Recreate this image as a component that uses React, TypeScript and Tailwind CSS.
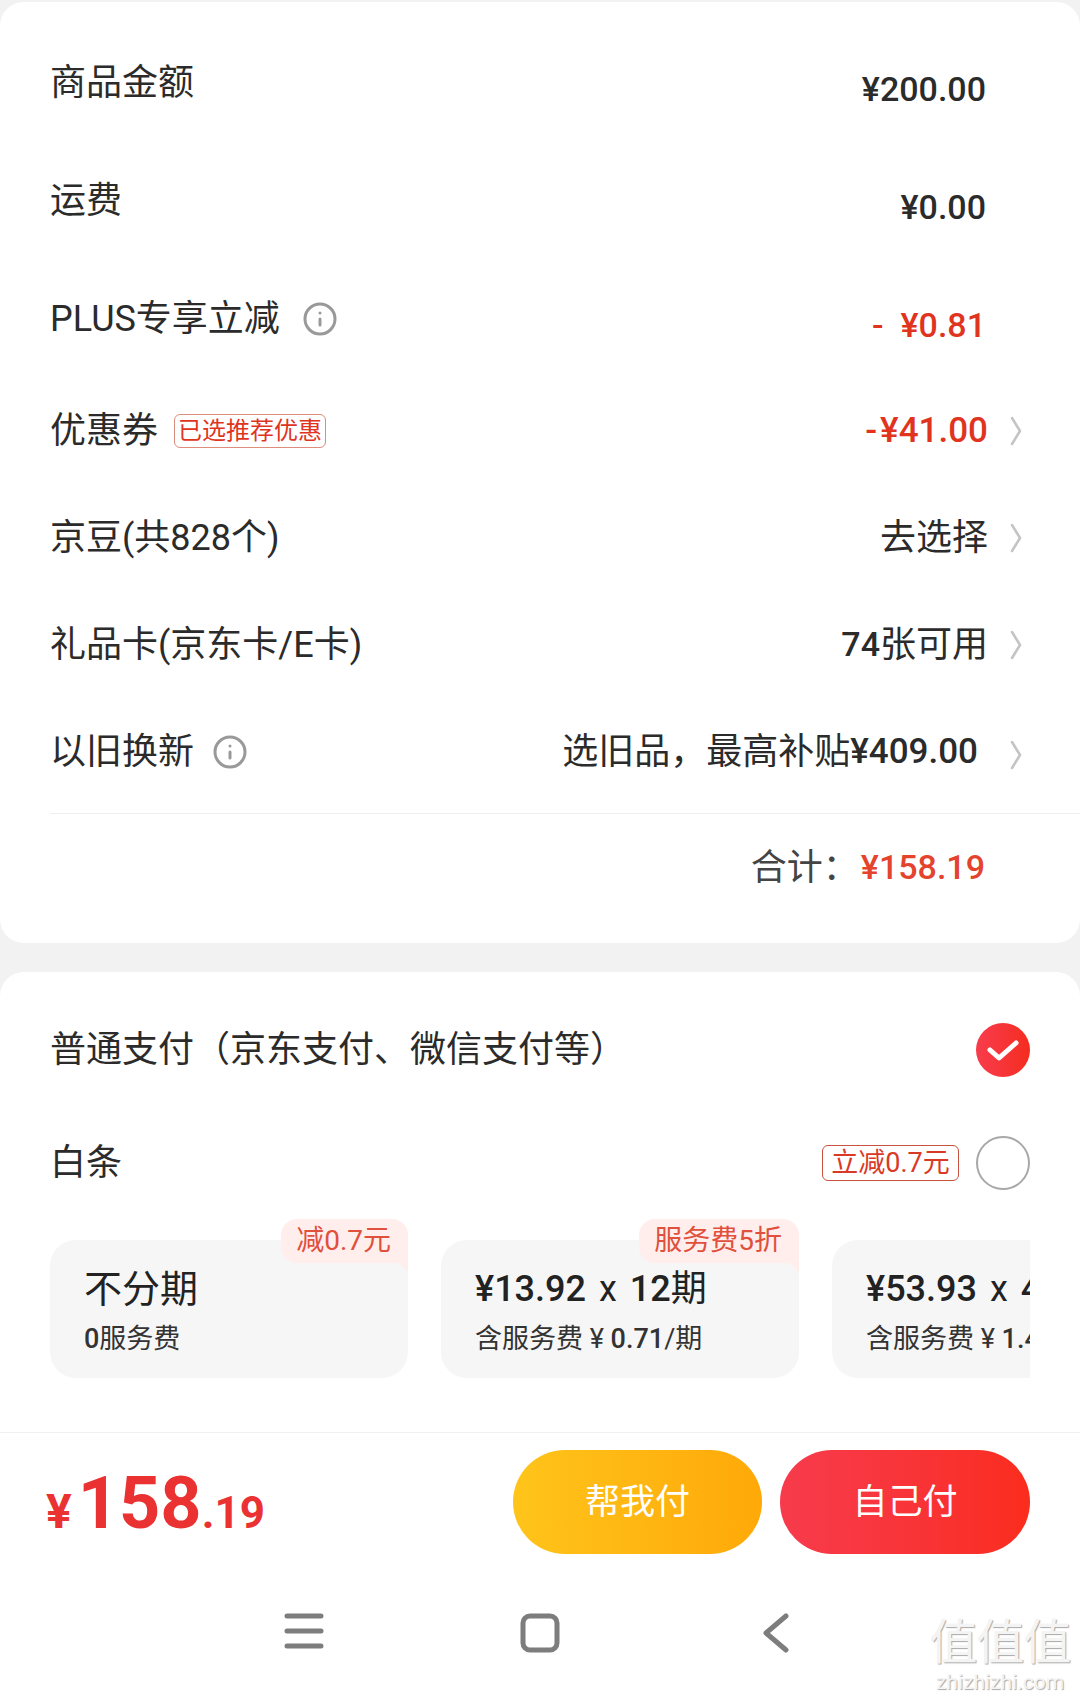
import { Info } from "lucide-react";

const ROWS_TOP = [
  { label: "商品金额", value: "¥200.00", h: "h-[118px]" },
  { label: "运费", value: "¥0.00", h: "h-[118px]" },
];

function Chevron() {
  return (
    <svg viewBox="0 0 12 30" className="w-[12px] h-[30px] shrink-0 ml-[22px]" fill="none">
      <path d="M2 2 L10 15 L2 28" stroke="#c4c4c4" strokeWidth="2.6" strokeLinecap="round" strokeLinejoin="round" />
    </svg>
  );
}

const PLANS = [
  { tag: "减0.7元", title: <span className="text-[38px] font-normal">不分期</span>, sub: <><b className="font-medium">0</b>服务费</> },
  {
    tag: "服务费5折",
    title: <>¥13.92 <span className="font-normal mx-[4px]">x</span> 12<span className="font-normal">期</span></>,
    sub: <>含服务费 ¥ <b className="font-medium">0.71</b>/期</>,
  },
  {
    tag: "",
    title: <>¥53.93 <span className="font-normal mx-[4px]">x</span> 4<span className="font-normal">期</span></>,
    sub: <>含服务费 ¥ <b className="font-medium">1.42</b>/期</>,
  },
];

export default function App() {
  return (
    <div className="relative w-[1080px] h-[1700px] overflow-hidden bg-[#f2f2f2] pt-[2px] flex flex-col text-[#2b2b2b] font-['Roboto','Noto_Sans_CJK_SC',sans-serif]">
      {/* order summary */}
      <section className="bg-white rounded-[24px] pt-[22px] pl-[50px] h-[941px] shrink-0 text-[36px]">
        {ROWS_TOP.map((r) => (
          <div key={r.label} className={`${r.h} flex items-center justify-between pr-[94px]`}>
            <span>{r.label}</span>
            <span className="font-medium pt-[12px] text-[34px]">{r.value}</span>
          </div>
        ))}
        <div className="h-[118px] flex items-center justify-between pr-[94px]">
          <span className="flex items-center">
            PLUS专享立减
            <Info className="ml-[22px] text-[#999999]" size={36} strokeWidth={2} />
          </span>
          <span className="font-medium pt-[12px] text-[34px] text-[#e0341f] whitespace-pre">-  ¥0.81</span>
        </div>
        <div className="h-[106px] flex items-center justify-between pr-[58px]">
          <span className="flex items-center">
            优惠券
            <span className="ml-[16px] h-[34px] px-[3px] flex items-center border border-[#dc8d7e] rounded-[6px] text-[#e0341f] text-[24px]">已选推荐优惠</span>
          </span>
          <span className="flex items-center font-medium text-[35px] text-[#e0341f]"><span className="mr-[3px]">-</span>¥41.00<Chevron /></span>
        </div>
        <div className="h-[107px] flex items-center justify-between pr-[58px]">
          <span>京豆(共828个)</span>
          <span className="flex items-center">去选择<Chevron /></span>
        </div>
        <div className="h-[107px] flex items-center justify-between pr-[58px]">
          <span>礼品卡(京东卡/E卡)</span>
          <span className="flex items-center"><b className="font-medium text-[34px]">74</b>张可用<Chevron /></span>
        </div>
        <div className="h-[107px] flex items-center justify-between pr-[58px]">
          <span className="flex items-center">
            以旧换新
            <Info className="ml-[18px] text-[#999999]" size={36} strokeWidth={2} />
          </span>
          <span className="flex items-center">
            选旧品，最高补贴<b className="font-medium text-[35px] pt-[2px]">¥409.00</b>
            <span className="ml-[10px] mt-[6px]"><Chevron /></span>
          </span>
        </div>
        <div className="border-t border-[#eeeeee] mt-[8px] h-[108px] flex items-center justify-end pr-[95px]">
          <span className="text-[#444444]">合计：</span>
          <span className="font-medium text-[34px] text-[#e4432d] ml-[2px]">¥158.19</span>
        </div>
      </section>

      {/* payment methods */}
      <section className="mt-[29px] bg-white rounded-t-[24px] flex-1 flex flex-col">
        <div className="pl-[50px] pr-[50px] h-[134px] pt-[22px] flex items-center justify-between text-[36px]">
          <span>普通支付（京东支付、微信支付等）</span>
          <span className="size-[54px] rounded-full bg-gradient-to-r from-[#f83c4b] to-[#f52c1c] flex items-center justify-center">
            <svg viewBox="0 0 32 24" className="w-[32px] h-[24px]" fill="none">
              <path d="M3 12 L12 20 L29 5" stroke="#ffffff" strokeWidth="5" strokeLinecap="round" strokeLinejoin="round" />
            </svg>
          </span>
        </div>
        <div className="pl-[50px] pr-[50px] h-[114px] flex items-center justify-between text-[36px]">
          <span>白条</span>
          <span className="flex items-center gap-[17px]">
            <span className="h-[36px] w-[137px] flex items-center justify-center border border-[#c9513f] rounded-[6px] text-[#d93a26] text-[27px]">立减0.7元</span>
            <span className="size-[54px] rounded-full border-2 border-[#a8a8a8]" />
          </span>
        </div>

        <div className="ml-[50px] mr-[50px] mt-[-3px] pt-[23px] overflow-hidden flex gap-[33px]">
          {PLANS.map((p, i) => (
            <div key={i} className="relative w-[358px] h-[138px] shrink-0 rounded-[26px] bg-[#f6f6f6] pl-[34px] pt-[24px]">
              {p.tag && (
                <>
                  <span className="absolute right-0 top-[-21px] h-[44px] pl-[15px] pr-[17px] flex items-center rounded-t-[16px] rounded-bl-[16px] bg-[#ffeeec] text-[#e0503c] text-[28px]">
                    {p.tag}
                  </span>
                  <span className="absolute right-0 top-[23px] size-[14px] bg-[#ffeeec]">
                    <span className="block size-[14px] rounded-tr-[14px] bg-[#f6f6f6]" />
                  </span>
                </>
              )}
              <div className="relative h-[50px] leading-[50px] text-[36px] font-medium text-[#222222] whitespace-nowrap">{p.title}</div>
              <div className="relative mt-[7px] text-[27px] leading-[36px] text-[#333333] whitespace-nowrap">{p.sub}</div>
            </div>
          ))}
        </div>

        <div className="mt-[54px] border-t border-[#f0f0f0] pl-[46px] pr-[50px] h-[138px] flex items-center justify-between shrink-0">
          <span className="font-bold text-[#ea3232] leading-none flex items-baseline pt-[4px]">
            <span className="text-[48px] mr-[6px]">¥</span>
            <span className="text-[72px]">158</span>
            <span className="text-[44px]">.19</span>
          </span>
          <span className="flex gap-[18px] text-[35px] text-white">
            <span className="w-[249px] h-[104px] pt-[3px] rounded-full bg-gradient-to-r from-[#ffc41a] to-[#ffa908] flex items-center justify-center">帮我付</span>
            <span className="w-[250px] h-[104px] pt-[3px] rounded-full bg-gradient-to-r from-[#f73b4c] to-[#fa2c1c] flex items-center justify-center">自己付</span>
          </span>
        </div>

        {/* system navigation */}
        <nav className="flex-1 flex items-start justify-center gap-[196px] pt-[43px] pr-[8px]">
          <svg viewBox="0 0 40 36" className="w-[40px] h-[36px]" fill="none" stroke="#7d7d7d" strokeWidth="5" strokeLinecap="round">
            <path d="M3 3 H37 M3 18 H37 M3 33 H37" />
          </svg>
          <svg viewBox="0 0 40 40" className="w-[40px] h-[40px]" fill="none" stroke="#7d7d7d" strokeWidth="5">
            <rect x="3" y="3" width="34" height="34" rx="7" />
          </svg>
          <svg viewBox="0 0 26 40" className="ml-[7px] w-[26px] h-[40px]" fill="none" stroke="#7d7d7d" strokeWidth="5" strokeLinecap="round" strokeLinejoin="round">
            <path d="M23 3 L3 20 L23 37" />
          </svg>
        </nav>
      </section>

      {/* watermark */}
      <div className="absolute right-[8px] top-[1614px] w-[144px] flex flex-col items-center text-[#f4f4f4] [text-shadow:1px_1px_1px_#a8a8a8] leading-none">
        <span className="text-[48px] tracking-[-1px] whitespace-nowrap font-['Noto_Sans_CJK_SC',sans-serif]">值值值</span>
        <span className="text-[21px] mt-[10px]">zhizhizhi.com</span>
      </div>
    </div>
  );
}
